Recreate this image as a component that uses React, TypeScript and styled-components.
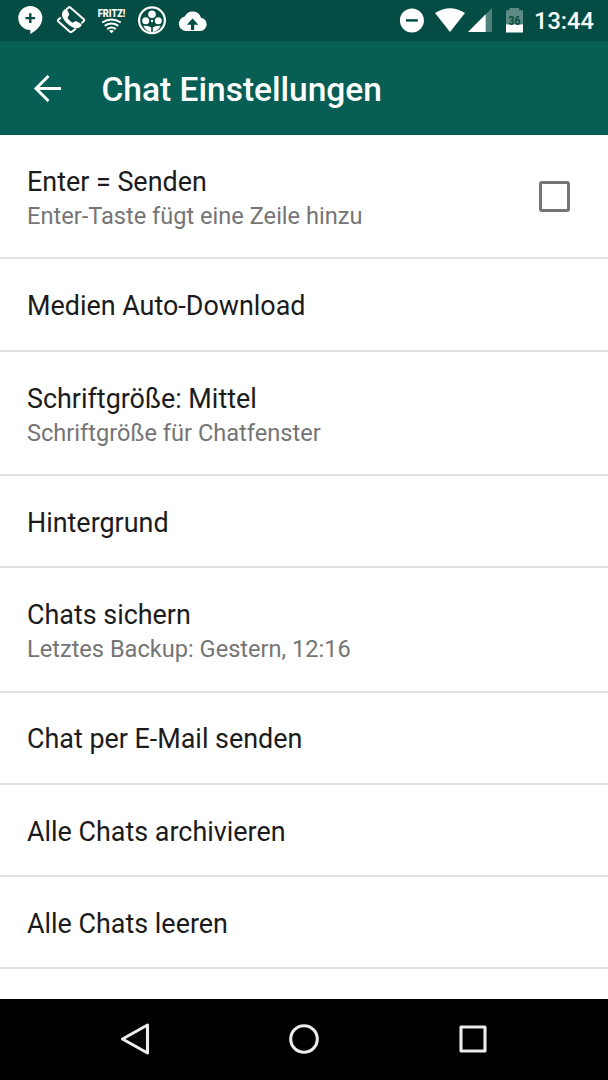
import React from 'react';
import styled, { createGlobalStyle } from 'styled-components';

const GlobalStyle = createGlobalStyle`
  * { box-sizing: border-box; }
  body { margin: 0; background: #fff; font-family: Roboto, "Noto Sans", sans-serif; }
`;

const Screen = styled.div`
  width: 608px;
  height: 1080px;
  display: flex;
  flex-direction: column;
  overflow: hidden;
  background: #fff;
`;

const StatusBar = styled.header`
  flex: none;
  height: 41px;
  padding: 0 14px 0 16px;
  display: flex;
  justify-content: space-between;
  background: #054d44;
  color: #fff;
`;

const StatusIcons = styled.svg`
  display: block;
  height: 41px;
  flex: none;
`;

const StatusRight = styled.div`
  display: flex;
  align-items: center;
`;

const Clock = styled.time`
  width: 60px;
  margin-left: 10px;
  padding-top: 1px;
  font-size: 23.6px;
  font-weight: 500;
  line-height: 40px;
  white-space: nowrap;
`;

const AppBar = styled.div`
  flex: none;
  height: 94px;
  padding-left: 33px;
  display: flex;
  align-items: center;
  background: #075e54;
  color: #fff;
`;

const BackButton = styled.button`
  width: 29px;
  height: 29px;
  padding: 0;
  margin: 0 39.500px 0 0;
  border: 0;
  background: none;
  color: inherit;
  svg { display: block; }
`;

const Title = styled.h1`
  margin: 0;
  padding-top: 4px;
  font-size: 33.5px;
  font-weight: 500;
  line-height: 40px;
  white-space: nowrap;
`;

const List = styled.main`
  flex: 1;
  min-height: 0;
  padding-top: 0.1px;
  overflow: hidden;
`;

const Row = styled.div<{ $tall?: boolean }>`
  height: ${(p) => (p.$tall ? 124.3 : 92.3)}px;
  padding: 0 38px 0 27px;
  display: flex;
  align-items: center;
  justify-content: space-between;
  border-bottom: 2px solid #e1e1e1;
`;

const RowText = styled.div<{ $tall?: boolean }>`
  padding-top: ${(p) => (p.$tall ? 5.4 : 3)}px;
`;

const RowTitle = styled.div`
  font-size: 26.9px;
  line-height: 34px;
  color: #1b1b1b;
  white-space: nowrap;
`;

const RowNote = styled.div`
  font-size: 23.6px;
  line-height: 34px;
  color: #757575;
  white-space: nowrap;
`;

const Checkbox = styled.span`
  width: 31px;
  height: 31px;
  border: 3px solid #757575;
  border-radius: 3px;
`;

const NavBar = styled.nav`
  flex: none;
  height: 81px;
  display: flex;
  justify-content: center;
  align-items: center;
  background: #000;
`;

const NavButton = styled.button`
  width: 169px;
  height: 81px;
  padding: 0 0 1px;
  border: 0;
  display: grid;
  place-items: center;
  background: none;
  svg { display: block; fill: none; stroke: #ececec; stroke-width: 3.1; stroke-linejoin: round; }
`;

interface Setting {
  title: string;
  note?: string;
  checkbox?: boolean;
}

const settings: Setting[] = [
  { title: 'Enter = Senden', note: 'Enter-Taste fügt eine Zeile hinzu', checkbox: true },
  { title: 'Medien Auto-Download' },
  { title: 'Schriftgröße: Mittel', note: 'Schriftgröße für Chatfenster' },
  { title: 'Hintergrund' },
  { title: 'Chats sichern', note: 'Letztes Backup: Gestern, 12:16' },
  { title: 'Chat per E-Mail senden' },
  { title: 'Alle Chats archivieren' },
  { title: 'Alle Chats leeren' },
];

const Notifications = () => (
  <StatusIcons width="194" viewBox="16 0 194 41" fill="#fff">
    <path d="M30.3 6a12 12 0 0 1 12 12c0 7-5.500 12.500-12 16v-4a12 12 0 0 1 0-24z" />
    <path d="M30.3 13.300v9.600M25.500 18.100h9.600" stroke="#054d44" strokeWidth="2.400" />
    <g fill="none" stroke="#fff" strokeWidth="2" strokeLinejoin="round" strokeLinecap="round">
      <path d="M66.500 9.300l2.100-1.800q.9-.7 1.700 0l13.500 11.800q.9.900 0 1.800l-1.800 1.600" />
      <path d="M60.300 18l-2 1.600q-.9.900 0 1.800l11.500 10.300q1 .8 2 0l3.500-2.600" />
    </g>
    <path d="M63.500 10.400c1.200-1.500 2.600-1.600 3.600-.3l1.900 3.400c.6 1.200.1 2.100-.8 3-.8.800-.7 1.500 0 2.400l3.100 3.100c.9.800 1.700.9 2.500.1 1.100-.9 2-1.200 3.100-.6l3.600 1.900c1.300.7 1.300 1.700.4 2.800-2 2.300-4.900 2.700-7.800 1.400-5-2.300-8.700-5.900-10.700-10.500-.9-2.500-.5-4.800 1.100-6.700z" />
    <text x="97.800" y="16.600" fontFamily="Roboto, sans-serif" fontWeight="900" fontSize="11" textLength="27.500" lengthAdjust="spacingAndGlyphs">FRITZ!</text>
    <g fill="none" stroke="#fff" strokeWidth="2">
      <path d="M102.200 22.500q9.300-6 18.600 0" />
      <path d="M104.700 25.900q6.800-4.600 13.600 0" />
      <path d="M107.200 29.100q4.300-3 8.600 0" />
    </g>
    <path d="M109 30.700q2.500-1.300 5 0l-2.500 2.500z" />
    <circle cx="152" cy="20.300" r="12.900" fill="none" stroke="#fff" strokeWidth="2.200" />
    <circle cx="152" cy="14.200" r="3.800" />
    <circle cx="145.700" cy="20.700" r="3.500" />
    <circle cx="158.300" cy="20.700" r="3.500" />
    <circle cx="152" cy="21" r="1.200" />
    <path d="M143.300 26q5-.9 7.900 1.600v4.600q-5-.9-7.900-6.200zM160.700 26q-5-.9-7.900 1.600v4.600q5-.9 7.900-6.200z" />
    <path d="M185.500 31a7.300 7.300 0 0 1-.8-14.400 8.700 8.700 0 0 1 16.300 1.100 6.700 6.700 0 0 1-.6 13.300z" />
    <path d="M191 30v-5.300h-4.200l5.800-6.100 5.800 6.100h-4.200v5.300z" fill="#054d44" />
  </StatusIcons>
);

const SystemIcons = () => (
  <StatusIcons width="126" viewBox="398 0 126 41" fill="#fff">
    <circle cx="411.900" cy="20.400" r="12" />
    <path d="M406 20.400h11.800" stroke="#054d44" strokeWidth="2.500" />
    <path d="M435 13q15-9.600 30 0l-15 19z" />
    <path d="M492 8v24h-24z" opacity=".3" />
    <path d="M485.700 14.300v17.700h-17.700z" />
    <path d="M506 10.300h3.500v-2.300h9.500v2.300h4v14h-17z" opacity=".35" />
    <path d="M506 24.300h17v8.200h-17z" />
    <text x="514.400" y="24.600" textAnchor="middle" fontFamily="Roboto, sans-serif" fontWeight="700" fontSize="12" textLength="12" lengthAdjust="spacingAndGlyphs" fill="#054d44">36</text>
  </StatusIcons>
);

export default function App() {
  return (
    <>
      <GlobalStyle />
      <Screen>
        <StatusBar>
          <Notifications />
          <StatusRight>
            <SystemIcons />
            <Clock>13:44</Clock>
          </StatusRight>
        </StatusBar>
        <AppBar>
          <BackButton aria-label="Zurück">
            <svg width="29" height="29" viewBox="0 0 29 29" fill="none" stroke="#fff" strokeWidth="3">
              <path d="M28 14.500H3M15.500 2L3 14.500 15.500 27" />
            </svg>
          </BackButton>
          <Title>Chat Einstellungen</Title>
        </AppBar>
        <List>
          {settings.map((s) => (
            <Row key={s.title} $tall={!!s.note}>
              <RowText $tall={!!s.note}>
                <RowTitle>{s.title}</RowTitle>
                {s.note && <RowNote>{s.note}</RowNote>}
              </RowText>
              {s.checkbox && <Checkbox role="checkbox" aria-checked="false" />}
            </Row>
          ))}
        </List>
        <NavBar>
          <NavButton aria-label="Zurück">
            <svg width="30" height="36" viewBox="0 0 30 36"><path d="M27.500 4v28L2.500 18z" /></svg>
          </NavButton>
          <NavButton aria-label="Start">
            <svg width="32" height="32" viewBox="0 0 32 32"><circle cx="16" cy="16" r="13.300" /></svg>
          </NavButton>
          <NavButton aria-label="Übersicht">
            <svg width="30" height="30" viewBox="0 0 30 30"><path d="M3 3h24v24H3z" /></svg>
          </NavButton>
        </NavBar>
      </Screen>
    </>
  );
}
